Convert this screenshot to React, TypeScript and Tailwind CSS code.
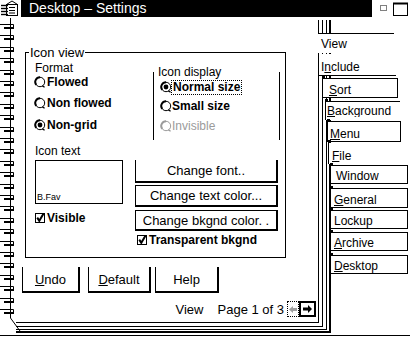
import React from "react";

function Radio({ on = false, dim = false }: { on?: boolean; dim?: boolean }) {
  const c = dim ? "#9b9b9b" : "#000";
  return (
    <svg width="12" height="12" viewBox="0 0 12 12" className="shrink-0">
      <circle cx="6" cy="6" r="4.7" fill="#fff" stroke={c} strokeWidth="1" />
      <path d="M6 1.3 A4.7 4.7 0 0 0 2.2 8.8" fill="none" stroke={c} strokeWidth="2" />
      <path d="M8.4 9.9 L10.6 11.3" stroke={c} strokeWidth="1.3" />
      {on && <circle cx="6" cy="6" r="2.4" fill={c} />}
    </svg>
  );
}

function Check() {
  return (
    <svg width="10" height="10" viewBox="0 0 10 10" className="shrink-0 overflow-visible">
      <rect x="0.5" y="0.5" width="9" height="9" fill="#fff" stroke="#000" />
      <path d="M2.2 4.6 L4.3 7.8 L8.6 0.6" fill="none" stroke="#000" strokeWidth="2" />
    </svg>
  );
}

function Spiral() {
  const ys = Array.from({ length: 26 }, (_, i) => Math.round(7 + i * 11.4));
  return (
    <svg width="16" height="319" className="shrink-0 overflow-visible">
      <path d="M10.5 1 V301 L20 314" fill="none" stroke="#000" />
      {ys.map((y) => (
        <g key={y}>
          <path d={`M0 ${y + 0.5} H13.5 V${y + 4}`} fill="none" stroke="#000" />
          <rect x="4" y={y + 3} width="10" height="2" fill="#000" />
        </g>
      ))}
    </svg>
  );
}

function TitleIcon() {
  return (
    <svg width="21" height="17" viewBox="0 0 21 17" className="shrink-0">
      <rect x="6.5" y="4.5" width="11" height="11" fill="#fff" stroke="#000" />
      <path d="M6.5 4.5 L12 1 L17.5 4.5" fill="none" stroke="#000" />
      <path d="M9 7.5 H15 M9 10.5 H15 M9 13 H15" stroke="#000" />
      {[5, 8, 11, 14].map((y) => (
        <path key={y} d={`M1 ${y + 0.5} H8`} stroke="#000" strokeWidth="1.4" />
      ))}
    </svg>
  );
}

function Controls() {
  return (
    <svg width="38" height="17" viewBox="0 0 38 17" className="shrink-0">
      <rect x="8.5" y="5.5" width="6" height="5" fill="none" stroke="#000" strokeDasharray="1 1" />
      <path d="M21.5 15 V3.5 H35.5 V15" fill="none" stroke="#000" />
      <path d="M21 3.5 H36" stroke="#000" strokeWidth="2" />
      <path d="M21 15.5 H36" stroke="#000" />
    </svg>
  );
}

function Btn({ children, cls }: { children: React.ReactNode; cls: string }) {
  return (
    <div
      className={`flex items-center justify-center border-l border-r-2 border-b-2 border-black bg-white text-[13px] leading-[13px] ${cls}`}
    >
      {children}
    </div>
  );
}

function Page() {
  return (
    <div className="w-[303px] h-[303px] border-r border-b border-black flex flex-col pt-[26px]">
      <fieldset className="ml-[9px] w-[261px] border border-black">
        <legend className="ml-[3px] px-[1px] text-[13px] leading-[13px]">Icon view</legend>
        <div className="pl-[9px] pb-[10px] flex flex-col">
          <div className="flex items-start">
            <div className="w-[118px] flex flex-col">
              <div className="mt-[2px] text-[12px] leading-[14px]">Format</div>
              <div className="-ml-[1px] flex items-center gap-[1px] h-[14px] text-[12px] font-bold">
                <Radio />
                <span>Flowed</span>
              </div>
              <div className="mt-[7px] -ml-[1px] flex items-center gap-[1px] h-[14px] text-[12px] font-bold">
                <Radio />
                <span>Non flowed</span>
              </div>
              <div className="mt-[8px] -ml-[1px] flex items-center gap-[1px] h-[14px] text-[12px] font-bold">
                <Radio on />
                <span>Non-grid</span>
              </div>
            </div>
            <fieldset className="mt-[6px] w-[127px] border-x border-y-0 border-black">
              <legend className="ml-[4px] text-[12px] leading-[14px]">Icon display</legend>
              <div className="pl-[6px] pb-[7px] flex flex-col">
                <div className="mt-[1px] flex items-center h-[14px] text-[12px] font-bold">
                  <Radio on />
                  <span className="-ml-[1px] border border-dotted border-black px-[1px] leading-[13px]">
                    Normal size
                  </span>
                </div>
                <div className="mt-[5px] flex items-center h-[14px] text-[12px] font-bold">
                  <Radio />
                  <span>Small size</span>
                </div>
                <div className="mt-[6px] flex items-center h-[14px] text-[12px] text-[#9b9b9b]">
                  <Radio dim />
                  <span>Invisible</span>
                </div>
              </div>
            </fieldset>
          </div>

          <div className="mt-[4px] flex items-start">
            <div className="w-[88px] flex flex-col">
              <div className="text-[12px] leading-[14px]">Icon text</div>
              <div className="mt-[2px] h-[44px] border border-black flex items-end pl-[1px] pb-[1px] text-[9px] leading-[10px]">
                B.Fav
              </div>
              <div className="mt-[7px] flex items-center gap-[2px] h-[14px] text-[12px] font-bold">
                <Check />
                <span>Visible</span>
              </div>
            </div>
            <div className="ml-[12px] mt-[16px] w-[143px] flex flex-col">
              <Btn cls="h-[23px]">Change font..</Btn>
              <Btn cls="mt-[2px] h-[22px] border-t">Change text color...</Btn>
              <Btn cls="mt-[3px] h-[21px] border-t">Change bkgnd color. .</Btn>
              <div className="mt-[2px] pl-[2px] flex items-center gap-[2px] h-[14px] text-[12px] font-bold">
                <Check />
                <span>Transparent bkgnd</span>
              </div>
            </div>
          </div>
        </div>
      </fieldset>

      <div className="ml-[6px] mt-[9px] flex">
        <Btn cls="w-[58px] h-[26px] text-[12px]">
          <span>
            <u>U</u>ndo
          </span>
        </Btn>
        <Btn cls="ml-[8px] w-[63px] h-[26px] text-[12px]">
          <span>
            <u>D</u>efault
          </span>
        </Btn>
        <Btn cls="ml-[4px] w-[64px] h-[26px] text-[12px]">Help</Btn>
      </div>

      <div className="mt-[8px] h-[16px] flex items-center justify-end pr-[2px] text-[13px] leading-[13px]">
        <span>View</span>
        <span className="ml-[14px]">Page 1 of 3</span>
        <div className="ml-[3px] w-[12px] h-[16px] border border-dotted border-black flex items-center justify-center">
          <svg width="8" height="7" viewBox="0 0 8 7">
            <path d="M0 3.5 L4 0 V2 H8 V5 H4 V7 Z" fill="#a0a0a0" />
          </svg>
        </div>
        <div className="w-[17px] h-[16px] border-2 border-black flex items-center justify-center">
          <svg width="9" height="8" viewBox="0 0 9 8">
            <path d="M9 4 L5 0 V2.5 H0 V5.5 H5 V8 Z" fill="#000" />
          </svg>
        </div>
      </div>
    </div>
  );
}

function Notch() {
  return <span className="absolute -top-[3px] -left-[1px] w-[3px] h-[3px] bg-black" />;
}

function Tabs() {
  return (
    <div className="-ml-[13px] flex-1 flex flex-col items-start pt-[16px] text-[12px] leading-[12px] whitespace-nowrap">
      <div className="w-[76px] h-[20px] border-t border-black bg-white pl-[3px] pt-[4px]">View</div>
      <div className="mt-[1px] ml-[1px] w-[77px] h-[22px] border-b border-black bg-white pl-[2px] pt-[7px]">
        I<u>n</u>clude
      </div>
      <div className="relative mt-[2px] ml-[4px] w-[76px] h-[20px] border border-black bg-white pl-[6px] pt-[5px]">
        <Notch />
        <u>S</u>ort
      </div>
      <div className="relative mt-[3px] ml-[7px] w-[75px] h-[19px] border-t border-l border-black bg-white pl-[1px] pt-[3px] overflow-visible">
        <Notch />
        <span className="block w-[66px] overflow-hidden">
          <u>B</u>ackground
        </span>
      </div>
      <div className="relative mt-[1px] ml-[9px] w-[74px] h-[21px] border border-black bg-white pl-[2px] pt-[6px]">
        <Notch />
        <u>M</u>enu
      </div>
      <div className="relative mt-[1px] ml-[10px] w-[70px] h-[21px] border-l border-black bg-white pl-[3px] pt-[7px]">
        <Notch />
        <u>F</u>ile
      </div>
      <div className="relative mt-[1px] ml-[12px] w-[78px] h-[19px] border border-black bg-white pl-[5px] pt-[4px]">
        <Notch />
        Window
      </div>
      <div className="relative mt-[4px] ml-[12px] w-[78px] h-[20px] border border-black bg-white pl-[3px] pt-[5px]">
        <Notch />
        <u>G</u>eneral
      </div>
      <div className="relative mt-[2px] ml-[12px] w-[78px] h-[19px] border border-black bg-white pl-[3px] pt-[4px]">
        <Notch />
        Lockup
      </div>
      <div className="relative mt-[3px] ml-[12px] w-[78px] h-[19px] border border-black bg-white pl-[3px] pt-[4px]">
        <Notch />
        <u>A</u>rchive
      </div>
      <div className="relative mt-[4px] ml-[12px] w-[78px] h-[19px] border border-black bg-white pl-[3px] pt-[4px]">
        <Notch />
        <u>D</u>esktop
      </div>
    </div>
  );
}

export default function App() {
  return (
    <div className="w-[410px] h-[337px] bg-white overflow-hidden text-black font-['Liberation_Sans',Arial,sans-serif] select-none">
      <div className="flex h-[17px]">
        <TitleIcon />
        <div className="flex-1 bg-black text-white text-[14px] leading-[17px] pl-[8px] whitespace-nowrap">
          Desktop – Settings
        </div>
        <Controls />
      </div>
      <div className="flex h-[319px] border-b border-black">
        <Spiral />
        <div className="mt-[3px] self-start border-r-2 border-b-2 border-black pr-[2px] pb-[1px]">
          <div className="border-r border-b border-black pr-[3px] pb-[2px]">
            <div className="border-r border-b border-black pr-[3px] pb-[3px]">
              <Page />
            </div>
          </div>
        </div>
        <Tabs />
      </div>
    </div>
  );
}
